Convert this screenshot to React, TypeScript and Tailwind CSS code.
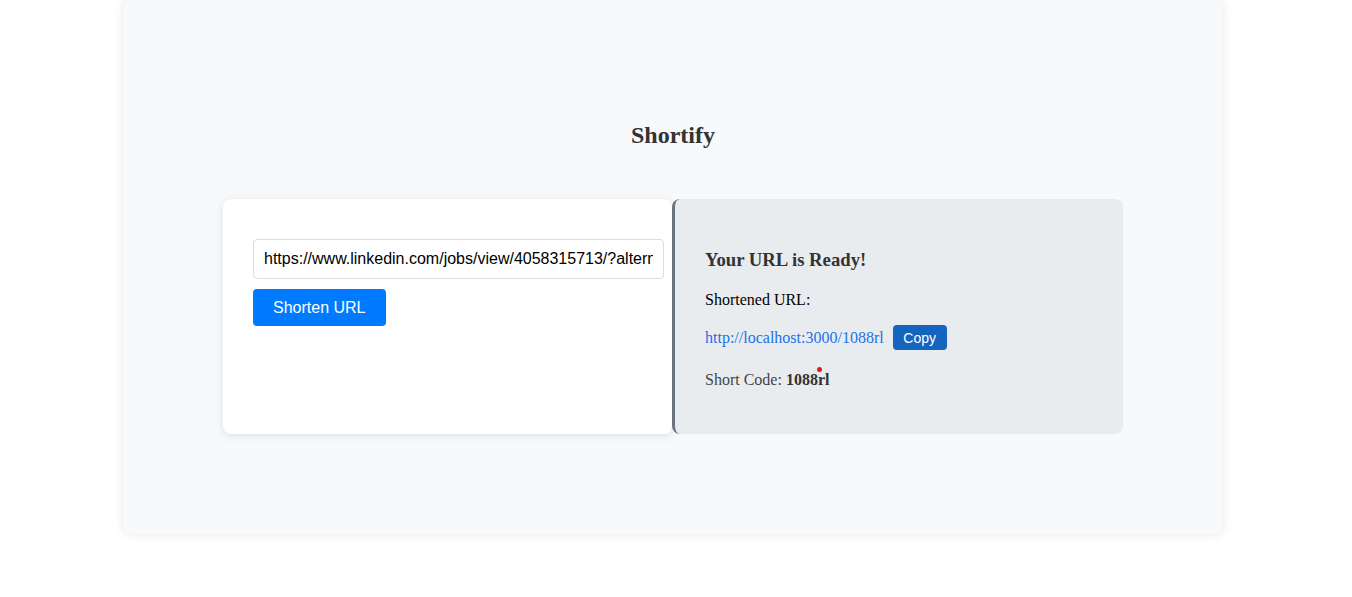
import React from "react";

export default function App() {
  return (
    <div className="min-h-[597px] bg-white" style={{ fontFamily: '"Liberation Serif", "Times New Roman", serif' }}>
      <div className="ml-[123px] w-[1100px] rounded-[8px] bg-[#f8f9fa] pt-[101px] pb-[100px] shadow-[0_0_10px_rgba(0,0,0,0.1)]">
        <h2 className="m-0 pt-[20px] text-center text-[24px] font-bold leading-[28px] text-[#333]">Shortify</h2>
        <div className="mx-auto mt-[50px] flex w-[900px]">
          <div className="w-[449px] rounded-[8px] bg-white p-[30px] shadow-[0_2px_10px_rgba(0,0,0,0.1)]">
            <input
              readOnly
              value="https://www.linkedin.com/jobs/view/4058315713/?alternateChannel=search"
              className="mt-[10px] box-content block h-[18px] w-[389px] rounded-[4px] border border-[#ddd] bg-white px-[10px] py-[10px] text-[16px] leading-[18px] text-black outline-none"
              style={{ fontFamily: '"Liberation Sans", Arial, sans-serif' }}
            />
            <button
              className="mt-[10px] block h-[37px] rounded-[4px] bg-[#007bff] px-[20px] text-[16px] leading-[18px] text-white"
              style={{ fontFamily: '"Liberation Sans", Arial, sans-serif' }}
            >
              Shorten URL
            </button>
          </div>
          <div className="w-[451px] rounded-[8px] border-l-[3px] border-[#6c757d] bg-[#e9ecef] px-[30px] pt-[50px] pb-[45px]">
            <h3 className="m-0 text-[18.72px] font-bold leading-[22px] text-[#333]">Your URL is Ready!</h3>
            <p className="mt-[20px] text-[16px] leading-[18px] text-black">Shortened URL:</p>
            <div className="mt-[16px] flex items-center">
              <span className="text-[16px] leading-[18px] text-[#1a73e8]">http://localhost:3000/1088rl</span>
              <button
                className="ml-[9px] h-[25px] w-[54px] rounded-[4px] bg-[#1565c0] text-[14px] leading-[16px] text-white"
                style={{ fontFamily: '"Liberation Sans", Arial, sans-serif' }}
              >
                Copy
              </button>
            </div>
            <p className="relative mt-[21px] text-[16px] leading-[18px] text-[#444]">
              Short Code: <strong className="text-[#333]">1088rl</strong>
              <span className="absolute left-[112px] top-[-4px] h-[5px] w-[5px] rounded-full bg-[#e01b1b]"></span>
            </p>
          </div>
        </div>
      </div>
    </div>
  );
}
